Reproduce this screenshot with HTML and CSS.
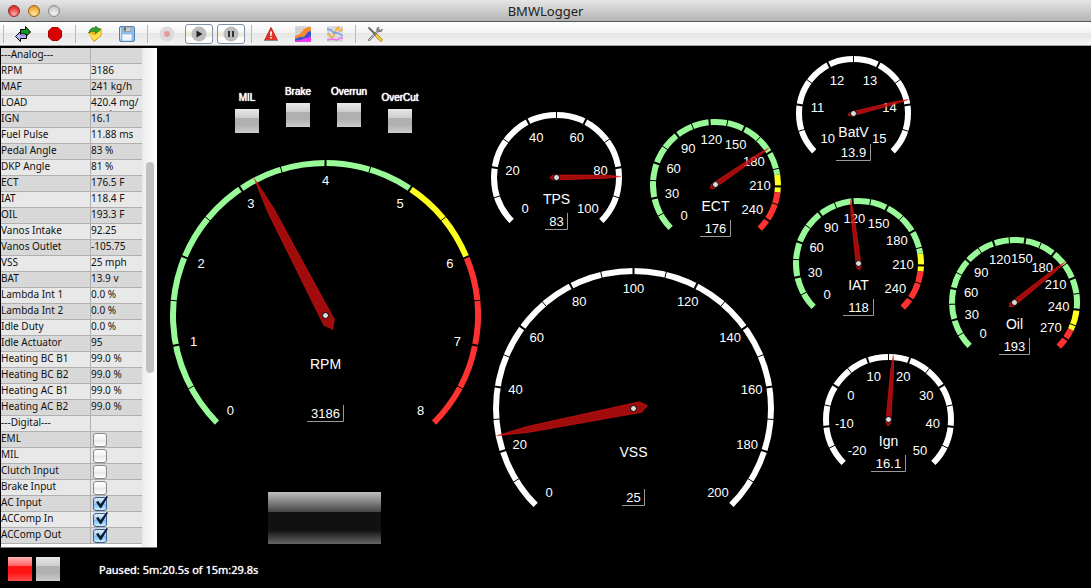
FILE: index.html
```html
<!DOCTYPE html>
<html lang="en">
<head>
  <meta charset="UTF-8" />
  <meta name="viewport" content="width=device-width, initial-scale=1.0" />
  <title>BMWLogger</title>
  <link rel="stylesheet" href="styles.css">
</head>
<body>
  <header class="titlebar">
    <div class="lights">
      <button class="light close" aria-label="Close"></button>
      <button class="light minimize" aria-label="Minimize"></button>
      <button class="light zoom" aria-label="Zoom"></button>
    </div>
    <h1>BMWLogger</h1>
  </header>

  <nav class="toolbar" aria-label="Toolbar">
    <span class="sep"></span>
    <button class="tool" aria-label="Connect">
      <svg viewBox="0 0 16 16">
        <path d="M5.5 3.5h5v-3l5 5.5-5 5v-3h-5z" fill="#0a9a1c" stroke="#000"/>
        <path d="M11.5 8.5h-6v-3L.5 10.500l5 5v-3h6z" fill="#b4b4f4" stroke="#000"/>
        <path d="M6 8h4v2.500H6z" fill="#8c8ce0"/>
      </svg>
    </button>
    <button class="tool" aria-label="Stop">
      <svg viewBox="0 0 16 16">
        <path d="M5 1.500h6L14.500 5v6L11 14.500H5L1.500 11V5z" fill="#d90000" stroke="#a80000"/>
      </svg>
    </button>
    <span class="sep"></span>
    <button class="tool" aria-label="Open log">
      <svg viewBox="0 0 16 16">
        <path d="M1.500 6.500L6 4l8-1.500v7L7 15.500z" fill="#e2b322" stroke="#b98a14"/>
        <path d="M1.500 7L8 9.500l6-6.500-.5 6.500L7 15z" fill="#ffe04a"/>
        <path d="M2 7c.5-4 3-6 6.500-5V0l5 4-5 3.500V5.500C6 5 4 5 2 7z" fill="#2fa02c" stroke="#14701a" stroke-width=".6"/>
      </svg>
    </button>
    <button class="tool" aria-label="Save log">
      <svg viewBox="0 0 16 16">
        <rect x=".5" y=".5" width="15" height="15" rx="1.500" fill="#8fc0ea" stroke="#4f7fb4"/>
        <rect x="4" y="1" width="8" height="4.500" fill="#c9cdd0" stroke="#7f8a94" stroke-width=".6"/>
        <rect x="5" y="1.500" width="2" height="3" fill="#666"/>
        <rect x="3" y="8" width="10" height="7" fill="#eef5fb" stroke="#86a9cc" stroke-width=".6"/>
        <path d="M1.500 2v11" stroke="#cfe4f8"/>
      </svg>
    </button>
    <span class="sep"></span>
    <button class="tool" aria-label="Record" disabled>
      <svg viewBox="0 0 16 16">
        <circle cx="8" cy="8" r="7.500" fill="#dcdcdc"/>
        <circle cx="8" cy="8" r="3" fill="#e59a9a"/>
      </svg>
    </button>
    <button class="tool pressed" aria-label="Play">
      <svg viewBox="0 0 16 16">
        <circle cx="8" cy="8" r="7.500" fill="#bdbdbd"/>
        <path d="M5.500 4.500L11.500 8l-6 3.500z" fill="#222"/>
      </svg>
    </button>
    <button class="tool pressed" aria-label="Pause">
      <svg viewBox="0 0 16 16">
        <circle cx="8" cy="8" r="7.500" fill="#bdbdbd"/>
        <path d="M5 5h2v6H5zM9 5h2v6H9z" fill="#333"/>
      </svg>
    </button>
    <span class="sep"></span>
    <button class="tool" aria-label="Trouble codes">
      <svg viewBox="0 0 16 16">
        <path d="M8 1.500L14.500 14.500H1.500z" fill="#e2362c" stroke="#c2251d" stroke-linejoin="round"/>
        <path d="M1 14.500h14" stroke="#8d8d8d"/>
        <path d="M7 5.500h2L8.600 10H7.400zM7.200 11h1.600v1.600H7.200z" fill="#fff"/>
      </svg>
    </button>
    <button class="tool" aria-label="Area chart">
      <svg viewBox="0 0 16 16">
        <rect width="16" height="16" fill="#dcdcdc"/>
        <path d="M2 0v16M5 0v16M8 0v16M0 3h16M0 6h16M0 9h16" stroke="#c2c2c2" stroke-width=".6"/>
        <path d="M0 10l5-2 4-5 4-2 3 0v15H0z" fill="#f58a2a"/>
        <path d="M0 13l5-2 4 0 4-5 3-1v11H0z" fill="#3c50d8"/>
        <path d="M0 14.500l6-.5 4-2 3 0 3-2v6H0z" fill="#f03cf0"/>
      </svg>
    </button>
    <button class="tool" aria-label="Line chart">
      <svg viewBox="0 0 16 16" fill="none">
        <rect width="16" height="16" fill="#e2e2e2"/>
        <path d="M2 0v16M5 0v16M8 0v16M11 0v16M14 0v16M0 2h16M0 5h16M0 8h16M0 11h16M0 14h16" stroke="#cdcdcd" stroke-width=".6"/>
        <path d="M0 8l2 0 2 3 2 0 3-7 2-3 2 4 3-2" stroke="#f8a820" stroke-width="1.400"/>
        <path d="M0 3l4 1 3 3 4 0 5 3" stroke="#6c9cf0" stroke-width="1.400"/>
        <path d="M0 14l5-1 5 1 3-2 3 0" stroke="#f070f0" stroke-width="1.400"/>
      </svg>
    </button>
    <span class="sep"></span>
    <button class="tool" aria-label="Settings">
      <svg viewBox="0 0 16 16" fill="none" stroke-linecap="round">
        <path d="M2 14L12 4" stroke="#777" stroke-width="2.400"/>
        <path d="M2 14L12 4" stroke="#d6d6d6"/>
        <path d="M11.500 1.500c-2 1-1.500 3 0 3.500s3 .5 3.500-1.500" stroke="#777" stroke-width="1.600"/>
        <path d="M2 2l6.500 6.500" stroke="#666" stroke-width="1.800"/>
        <path d="M9.500 9.500l4.500 4.500" stroke="#a8861c" stroke-width="3.200"/>
        <path d="M9.500 9.500l4.500 4.500" stroke="#f4d340" stroke-width="2"/>
      </svg>
    </button>
  </nav>

  <main class="main">
    <aside class="panel">
      <div class="table-wrap">
        <table class="values">
          <tbody id="values"></tbody>
        </table>
      </div>
      <div class="scrollbar"><div class="thumb"></div></div>
    </aside>

    <section class="dash">
      <svg class="gauges" id="gauges"></svg>
      <div class="led mil"><span>MIL</span><i class="lamp"></i></div>
      <div class="led brake"><span>Brake</span><i class="lamp"></i></div>
      <div class="led overrun"><span>Overrun</span><i class="lamp"></i></div>
      <div class="led overcut"><span>OverCut</span><i class="lamp"></i></div>
      <div class="strip"></div>
    </section>
  </main>

  <footer class="status">
    <i class="lamp red"></i>
    <i class="lamp"></i>
    <span class="state">Paused: 5m:20.5s of 15m:29.8s</span>
  </footer>

  <script src="script.js"></script>
</body>
</html>
```
FILE: styles.css
```css
* {
  box-sizing: border-box;
}
body {
  margin: 0;
  height: 100vh;
  display: flex;
  flex-direction: column;
  overflow: hidden;
  background: #000;
  color: #fff;
  font-family: "Noto Sans", "Open Sans", sans-serif;
}
button {
  margin: 0;
  padding: 0;
  border: none;
  background: none;
}

/* window chrome */
.titlebar {
  display: grid;
  grid-template-columns: 1fr auto 1fr;
  align-items: center;
  height: 22px;
  flex: none;
  background: linear-gradient(#e6e6e6, #b4b4b4);
  border-bottom: 1px solid #555;
}
.titlebar h1 {
  margin: 0;
  font-size: 13px;
  font-weight: normal;
  line-height: 20px;
  color: #222;
}
.lights {
  display: flex;
  gap: 8px;
  padding-left: 8px;
}
.light {
  width: 12px;
  height: 12px;
  border: 1px solid #8a8a8a;
  border-radius: 50%;
}
.close {
  background: radial-gradient(circle at 50% 80%, #ffb0a8, #e8403c 60%, #c82c2c);
  border-color: #8c2a28;
}
.minimize {
  background: radial-gradient(circle at 50% 80%, #ffe9a0, #f4b040 60%, #d08820);
  border-color: #96651c;
}
.zoom {
  background: radial-gradient(circle at 50% 80%, #f2f2f2, #d2d2d2 60%, #b8b8b8);
}

.toolbar {
  display: flex;
  align-items: center;
  height: 24px;
  flex: none;
  background: linear-gradient(#fff, #f2f2f2 50%, #e6e6e6 50%, #f4f4f4);
  border-bottom: 1px solid #a0a0a0;
}
.sep {
  width: 1px;
  height: 18px;
  margin: 0 3px 0 4px;
  background: #b8b8b8;
}
.sep:first-child {
  margin-left: 3px;
}
.tool {
  display: flex;
  align-items: center;
  justify-content: center;
  width: 32px;
  height: 20px;
}
.tool svg {
  width: 16px;
  height: 16px;
}
.pressed {
  width: 28px;
  margin: 0 2px;
  border: 1px solid #8090a8;
  border-radius: 3px;
  background: linear-gradient(#fff 30%, #ecebdc 45%, #ecebdc 60%, #fff 75%);
}

/* value list */
.main {
  display: flex;
  flex: 1;
  min-height: 0;
}
.panel {
  display: flex;
  width: 157px;
  flex: none;
  margin-top: 2px;
  border-left: 1px solid #000;
  border-bottom: 1px solid #777;
  background: #fff;
}
.table-wrap {
  flex: 1;
  overflow: hidden;
}
.values {
  width: 100%;
  table-layout: fixed;
  border-spacing: 0;
  color: #111;
  font-size: 10px;
  line-height: 12px;
}
.values th,
.values td {
  height: 16px;
  padding: 0;
  font-weight: normal;
  text-align: left;
  vertical-align: top;
  border-bottom: 1px solid #b0b0b0;
}
.values th {
  width: 90px;
  border-right: 1px solid #b0b0b0;
}
.values tr:nth-child(odd) {
  background: #d8d8d8;
}
.values tr:nth-child(even) {
  background: #e8e8e8;
}
.cell {
  height: 15px;
  overflow: hidden;
}
.values input {
  appearance: none;
  display: block;
  position: relative;
  width: 14px;
  height: 14px;
  margin: 1px 0 0 2px;
  border: 1px solid #888;
  border-radius: 3px;
  background: linear-gradient(#fff, #f0f0f0 50%, #e6e6e6 50%, #fff);
}
.values input:checked {
  border-color: #3c5c98;
  background: linear-gradient(#dcecfb, #9ccaf4 50%, #7cb8f0 50%, #c4f0ff);
}
.values input:checked::after {
  content: "";
  position: absolute;
  left: 2px;
  top: -2px;
  width: 12px;
  height: 12px;
  background: #0a1c30;
  clip-path: polygon(0 50%, 18% 42%, 38% 66%, 88% 0, 100% 6%, 44% 100%, 34% 100%);
}
.scrollbar {
  width: 15px;
  padding: 114px 3px 0 4px;
  background: linear-gradient(90deg, #ececec, #fff);
}
.thumb {
  height: 211px;
  border-radius: 4px;
  background: #c1c1c1;
}

/* dashboard canvas, every item is placed freely on it */
.dash {
  position: relative;
  flex: 1;
  overflow: hidden;
}
.gauges {
  display: block;
  width: 100%;
  height: 100%;
  font-family: "Liberation Sans", Arial, sans-serif;
  font-size: 13px;
  fill: #fff;
  text-anchor: middle;
}
.gauges .name {
  font-size: 14px;
}
.gauges .readout {
  fill: none;
  stroke: #999;
  stroke-width: 1px;
}
.gauges .band {
  fill: none;
  stroke-width: 6px;
}
.gauges .major {
  stroke: #000;
  stroke-width: 2px;
}
.gauges .minor {
  stroke: #000;
  stroke-width: 1px;
}
.gauges .needle {
  fill: #c80e0e;
  fill-opacity: 0.8;
  stroke: #f01414;
  stroke-opacity: 0.6;
  stroke-width: 1px;
}
.gauges .hub {
  fill: #ddd;
  stroke: #000;
}
.lamp {
  display: block;
  width: 24px;
  height: 24px;
  background: linear-gradient(#e8e8e8, #ccc 9px, #b0b0b0 9px, #b0b0b0 16px, #ccc);
}
.lamp.red {
  background: linear-gradient(#ffb4b4, #ff6060 9px, #ff1414 9px, #ff1414 16px, #ff5050);
}
.led {
  position: absolute;
  display: flex;
  flex-direction: column;
  align-items: center;
  gap: 5px;
  width: 60px;
  font-family: "Liberation Sans", Arial, sans-serif;
  font-size: 10px;
  line-height: 12px;
  text-shadow: 0 0 1px #fff, 0 0 1px #fff;
}
.mil {
  left: 60px;
  top: 46px;
}
.brake {
  left: 111px;
  top: 40px;
}
.overrun {
  left: 162px;
  top: 40px;
}
.overcut {
  left: 213px;
  top: 46px;
}
.strip {
  position: absolute;
  left: 111px;
  top: 446px;
  width: 113px;
  height: 52px;
  background: linear-gradient(#c0c0c0, #444 20px, #111 20px, #111 38px, #666);
}

.status {
  display: flex;
  align-items: center;
  gap: 4px;
  height: 40px;
  flex: none;
  padding: 2px 8px 0;
  font-size: 11px;
}
.state {
  margin-left: 35px;
  text-shadow: 0 0 1px #fff;
}
```
FILE: script.js
```js
const rows = [
  ['---Analog---', ''],
  ['RPM', '3186'],
  ['MAF', '241 kg/h'],
  ['LOAD', '420.4 mg/ stroke'],
  ['IGN', '16.1'],
  ['Fuel Pulse', '11.88 ms'],
  ['Pedal Angle', '83 %'],
  ['DKP Angle', '81 %'],
  ['ECT', '176.5 F'],
  ['IAT', '118.4 F'],
  ['OIL', '193.3 F'],
  ['Vanos Intake', '92.25'],
  ['Vanos Outlet', '-105.75'],
  ['VSS', '25 mph'],
  ['BAT', '13.9 v'],
  ['Lambda Int 1', '0.0 %'],
  ['Lambda Int 2', '0.0 %'],
  ['Idle Duty', '0.0 %'],
  ['Idle Actuator', '95'],
  ['Heating BC B1', '99.0 %'],
  ['Heating BC B2', '99.0 %'],
  ['Heating AC B1', '99.0 %'],
  ['Heating AC B2', '99.0 %'],
  ['---Digital---', ''],
  ['EML', false],
  ['MIL', false],
  ['Clutch Input', false],
  ['Brake Input', false],
  ['AC Input', true],
  ['ACComp In', true],
  ['ACComp Out', true]
];

const green = '#98fb98';
const yellow = '#ffff1e';
const red = '#ff3232';
const white = '#ffffff';

// bands: [from, to, colour]
const gauges = [
  { name: 'RPM', x: 168, y: 269, r: 155, min: 0, max: 8, step: 1, value: 3.186, text: '3186',
    bands: [[0, 5, green], [5, 6, yellow], [6, 8, red]] },
  { name: 'TPS', x: 399, y: 131, r: 65, min: 0, max: 100, step: 20, value: 83, text: '83',
    bands: [[0, 100, white]] },
  { name: 'ECT', x: 558, y: 138, r: 65, min: 0, max: 250, step: 30, value: 176.5, text: '176',
    bands: [[0, 200, green], [200, 215, yellow], [215, 250, red]] },
  { name: 'BatV', x: 696, y: 67, r: 57, min: 10, max: 15, step: 1, value: 13.9, text: '13.9',
    bands: [[10, 15, white]] },
  { name: 'IAT', x: 701, y: 217, r: 65, min: 0, max: 250, step: 30, value: 118.4, text: '118',
    bands: [[0, 200, green], [200, 215, yellow], [215, 250, red]] },
  { name: 'Oil', x: 857, y: 256, r: 65, min: 0, max: 280, step: 30, value: 193.3, text: '193',
    bands: [[0, 240, green], [240, 260, yellow], [260, 280, red]] },
  { name: 'Ign', x: 731, y: 373, r: 65, min: -20, max: 50, step: 10, value: 16.1, text: '16.1',
    bands: [[-20, 50, white]] },
  { name: 'VSS', x: 476, y: 362, r: 140, min: 0, max: 200, step: 20, value: 25, text: '25',
    bands: [[0, 200, white]] }
];

function fillTable() {
  const body = document.getElementById('values');
  rows.forEach(([label, value], i) => {
    const tr = document.createElement('tr');
    if (typeof value === 'boolean') {
      tr.innerHTML = `<th><label for="d${i}">${label}</label></th>
        <td><input type="checkbox" id="d${i}" ${value ? 'checked' : ''}></td>`;
    } else {
      tr.innerHTML = `<th>${label}</th><td><div class="cell">${value}</div></td>`;
    }
    body.appendChild(tr);
  });
}

// 270 degree sweep, 0 degrees points up
function angle(g, v) {
  return -135 + (v - g.min) / (g.max - g.min) * 270;
}

function point(g, v, r) {
  const a = angle(g, v) * Math.PI / 180;
  return [g.cx + r * Math.sin(a), g.cy - r * Math.cos(a)];
}

function drawGauge(g) {
  // dials are centred on the middle of a pixel
  g.cx = g.x + 0.5;
  g.cy = g.y + 0.5;
  const r = g.r + 0.5;
  const mid = r - 3;

  let out = '';
  for (const [from, to, color] of g.bands) {
    const large = angle(g, to) - angle(g, from) > 180 ? 1 : 0;
    out += `<path class="band" stroke="${color}" d="M${point(g, from, mid)} A${mid} ${mid} 0 ${large} 1 ${point(g, to, mid)}"/>`;
  }
  const half = g.step / 2;
  for (let i = 0; g.min + i * half <= g.max; i++) {
    const v = g.min + i * half;
    const major = i % 2 === 0;
    out += `<path class="${major ? 'major' : 'minor'}" d="M${point(g, v, r - 8)} L${point(g, v, r + 1)}"/>`;
    if (major) {
      const [x, y] = point(g, v, r - 21);
      out += `<text x="${x}" y="${Math.round(y + 4)}">${v}</text>`;
    }
  }
  out += `<text class="name" x="${g.cx}" y="${g.y + Math.round(g.r * 0.3) + 7}">${g.name}</text>`;

  const base = g.y + Math.round(g.r * 0.6) + 10;
  const dots = g.text.includes('.') ? 1 : 0;
  const w = Math.round((g.text.length * 7.2 - dots * 3.6 + 8) / 2);
  out += `<text x="${g.cx}" y="${base}">${g.text}</text>`;
  out += `<path class="readout" d="M${g.x - w} ${base + 3.5}H${g.cx + w}V${base - 13}"/>`;

  out += `<polygon class="needle" transform="translate(${g.cx} ${g.cy}) rotate(${angle(g, g.value)})"
    points="0,${-r + 1} ${r * 0.022},${-r * 0.76} ${r * 0.038},${r * 0.05} 0,${r * 0.1} ${-r * 0.038},${r * 0.05} ${-r * 0.022},${-r * 0.76}"/>`;
  out += `<circle class="hub" cx="${g.cx}" cy="${g.cy}" r="3"/>`;
  return out;
}

fillTable();
document.getElementById('gauges').innerHTML = gauges.map(drawGauge).join('');
```
